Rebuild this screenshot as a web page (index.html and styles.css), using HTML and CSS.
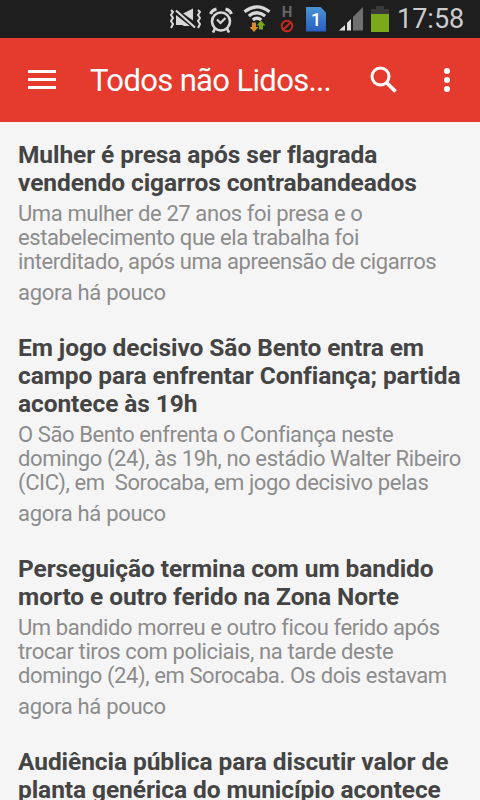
FILE: index.html
```
<!DOCTYPE html>
<html lang="pt-BR">
  <head>
    <meta charset="UTF-8" />
    <meta name="viewport" content="width=device-width, initial-scale=1.0" />
    <title>Todos não Lidos</title>
    <link rel="stylesheet" href="styles.css">
  </head>
  <body>
    <div class="status-bar">
      <svg class="mute" width="32" height="24" viewBox="0 0 32 24" fill="none" stroke="#d8d8d8" stroke-width="2">
        <path d="M7 8l14 11h-6l-2-1H7zM14 6.500l10-5v12z" fill="#d8d8d8" stroke="none" />
        <path d="M7 3.500l20 17.500" stroke="#1e1e1e" stroke-width="4.500" />
        <path d="M7 3.500l19 17" stroke-width="2.200" />
        <path d="M2 3l2 2-2 3 2 3-2 3 2 3-2 4M29 3l2 2-2 3 2 3-2 3 2 3-2 4" stroke-width="2" />
      </svg>
      <svg class="alarm" width="24" height="26" viewBox="0 0 24 26" fill="none" stroke="#d8d8d8" stroke-width="2.600">
        <circle cx="12" cy="14.500" r="9" />
        <path d="M8 12.500l3.500 3.500 5-5" stroke-width="2.200" />
        <path d="M1.500 7Q3 3 7.500 2M22.500 7Q21 3 16.500 2" stroke-width="3" />
        <path d="M6 21.500l-2 4M18 21.500l2 4" />
      </svg>
      <svg class="wifi" width="28" height="28" viewBox="0 0 28 28" fill="none" stroke="#d8d8d8" stroke-width="3.300">
        <path d="M1.500 6.800Q14-3 26.500 6.800M5.800 11q8.200-6.500 16.400 0M9.800 15q4.200-3.500 8.400 0" />
        <path d="M9 17.500h4V22h2.500L11 27l-4.500-5H9z" fill="#e08a2c" stroke="none" />
        <path d="M16 24.500h4v-4h2.500l-4.500-5-4.500 5H16z" fill="#77a817" stroke="none" />
      </svg>
      <div class="network">
        <span>H</span>
        <svg width="14" height="14" viewBox="0 0 14 14" fill="none" stroke="#c22a1e" stroke-width="2">
          <circle cx="7" cy="7" r="5.300" />
          <path d="M3.500 10.500l7-7" />
        </svg>
      </div>
      <div class="sim">1</div>
      <svg class="signal" width="25" height="24" viewBox="0 0 25 24">
        <path d="M0 23.500L6 18v5.500zM8 16l4-4v11.500H8z" fill="#e0e0e0" />
        <path d="M14 10l10-10v23.500H14z" fill="#707070" />
      </svg>
      <svg class="battery" width="18" height="26" viewBox="0 0 18 26">
        <path d="M5 0h8v3h5v5H0V3h5z" fill="#3a3a3a" />
        <path d="M0 8h18v18H0z" fill="#7aaa18" />
      </svg>
      <span class="clock">17:58</span>
    </div>
    <header class="toolbar">
      <svg class="menu" width="28" height="20" viewBox="0 0 28 20" fill="#fff">
        <path d="M0 0h28v3H0zM0 8h28v3H0zM0 16h28v3H0z" />
      </svg>
      <h1 class="title">Todos não Lidos...</h1>
      <svg class="search" width="28" height="28" viewBox="0 0 28 28" fill="none" stroke="#fff" stroke-width="3">
        <circle cx="10.500" cy="10.500" r="8.500" />
        <path d="M16.500 16.500l9 9" stroke-width="3.800" />
      </svg>
      <svg class="more" width="6" height="24" viewBox="0 0 6 24" fill="#fff">
        <circle cx="3" cy="3" r="3" />
        <circle cx="3" cy="12" r="3" />
        <circle cx="3" cy="21" r="3" />
      </svg>
    </header>
    <main class="news">
      <article class="item">
        <h2>Mulher é presa após ser flagrada<br>vendendo cigarros contrabandeados</h2>
        <p class="summary">Uma mulher de 27 anos foi presa e o<br>estabelecimento que ela trabalha foi<br>interditado, após uma apreensão de cigarros</p>
        <p class="time">agora há pouco</p>
      </article>
      <article class="item">
        <h2>Em jogo decisivo São Bento entra em<br>campo para enfrentar Confiança; partida<br>acontece às 19h</h2>
        <p class="summary">O São Bento enfrenta o Confiança neste<br>domingo (24), às 19h, no estádio Walter Ribeiro<br>(CIC), em &nbsp;Sorocaba, em jogo decisivo pelas</p>
        <p class="time">agora há pouco</p>
      </article>
      <article class="item">
        <h2>Perseguição termina com um bandido<br>morto e outro ferido na Zona Norte</h2>
        <p class="summary">Um bandido morreu e outro ficou ferido após<br>trocar tiros com policiais, na tarde deste<br>domingo (24), em Sorocaba. Os dois estavam</p>
        <p class="time">agora há pouco</p>
      </article>
      <article class="item">
        <h2>Audiência pública para discutir valor de<br>planta genérica do município acontece</h2>
      </article>
    </main>
  </body>
</html>
```
FILE: styles.css
```
* {
  margin: 0;
  padding: 0;
  box-sizing: border-box;
  font-family: Roboto, sans-serif;
}
body {
  background: #f5f5f5;
  height: 100vh;
  overflow: hidden;
}
.status-bar {
  height: 38px;
  background: #1e1e1e;
  display: flex;
  align-items: center;
  padding-left: 169px;
}
.alarm {
  margin-left: 8px;
  margin-top: 2px;
}
.wifi {
  margin-left: 10px;
}
.network {
  width: 14px;
  margin-left: 9px;
  text-align: center;
  font-size: 15px;
  font-weight: 700;
  line-height: 13px;
  color: #666;
}
.network span,
.network svg {
  display: block;
}
.sim {
  width: 20px;
  height: 25px;
  margin-left: 12px;
  background: linear-gradient(#4a94d4, #2a5cc0);
  clip-path: polygon(0 0, 70% 0, 100% 24%, 100% 100%, 0 100%);
  color: #fff;
  font-size: 18px;
  font-weight: 500;
  line-height: 26px;
  text-align: center;
}
.signal {
  margin-left: 13px;
}
.battery {
  margin-left: 7px;
}
.clock {
  margin-left: 8px;
  font-size: 27px;
  color: #ccc;
}
.toolbar {
  height: 84px;
  background: #e53b2e;
  display: flex;
  align-items: center;
  padding: 0 30px 0 28px;
}
.title {
  width: 280px;
  margin-left: 34px;
  color: #fff;
  font-size: 31px;
  font-weight: 400;
  letter-spacing: -0.65px;
}
.more {
  margin-left: 46px;
}
.news {
  padding: 19px 18px 0;
}
.item {
  margin-bottom: 29px;
  white-space: nowrap;
}
.item h2 {
  font-size: 24.5px;
  line-height: 28px;
  letter-spacing: -0.08px;
  color: #444;
}
.summary,
.time {
  font-size: 22px;
  line-height: 24px;
  letter-spacing: -0.4px;
  color: #8c8c8c;
  margin-top: 5px;
}
.time {
  margin-top: 7px;
  letter-spacing: -0.3px;
}
```
